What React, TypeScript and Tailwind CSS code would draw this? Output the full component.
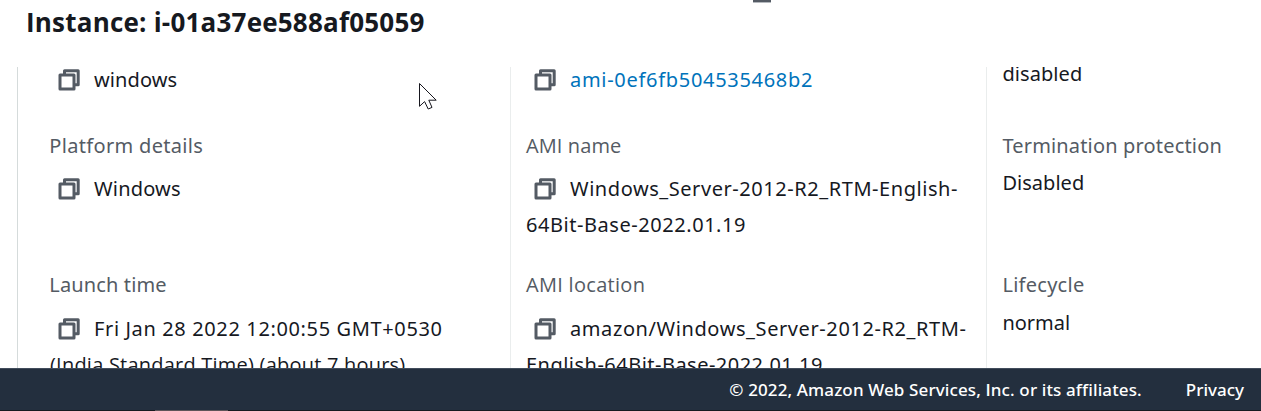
import React from "react";

function CopyIcon() {
  return (
    <svg
      className="ml-2 mr-[14px] inline-block align-[-4px]"
      width="22"
      height="22"
      viewBox="0 0 22 22"
      fill="none"
      stroke="#545b64"
      strokeWidth="3"
      strokeLinejoin="round"
    >
      <path d="M2 6h14v14H2z" />
      <path d="M6.5 6V1.8h13.7v14h-4.2" />
    </svg>
  );
}

function Label({ children, className = "" }: { children: React.ReactNode; className?: string }) {
  return <div className={`h-7 whitespace-nowrap leading-7 text-[#545b64] ${className}`}>{children}</div>;
}

const noto = "font-['Noto_Sans',sans-serif]";
const open = "font-['Open_Sans',sans-serif]";

export default function App() {
  return (
    <div className={`relative flex h-[411px] w-[1261px] flex-col overflow-hidden bg-white text-[20px] text-[#16191f] ${noto}`}>
      <header className="h-[67px] shrink-0 pl-[26px] pt-[4px]">
        <h1 className={`h-9 whitespace-nowrap text-[26px] font-bold leading-9 tracking-[0.21px] ${open}`}>
          Instance: i-01a37ee588af05059
        </h1>
      </header>
      <div className="absolute left-[753px] top-0 h-[3px] w-[18px] border-b border-[#b5b9be] bg-[#545b64]" />

      <main className="ml-[17px] grid h-[301px] shrink-0 grid-cols-[493px_476px_275px] overflow-hidden whitespace-nowrap">
        <section className="border-l border-[#d5dbdb] pl-8">
          <div className="-mt-[5px] h-[70px] leading-9">
            <CopyIcon />
            <span className="tracking-[0.09px]">windows</span>
          </div>
          <div className="h-[139px]">
            <Label className="-ml-[0.7px] tracking-[0.321px]">Platform details</Label>
            <div className="mt-[11px] leading-9">
              <CopyIcon />
              <span className="tracking-[0.193px]">Windows</span>
            </div>
          </div>
          <Label className="-ml-[0.7px] tracking-[0.134px]">Launch time</Label>
          <div className="mt-3 leading-9">
            <CopyIcon />
            <span className="tracking-[0.628px]">Fri Jan 28 2022 12:00:55 GMT+0530</span>
            <br />
            <span className={`tracking-[0.22px] ${open}`}>(India Standard Time) (about 7 hours)</span>
          </div>
        </section>

        <section className="border-l border-[#eaeded] pl-[15px]">
          <div className="-mt-[5px] h-[70px] leading-9">
            <CopyIcon />
            <a className="tracking-[0.7px] text-[#0073bb]">ami-0ef6fb504535468b2</a>
          </div>
          <div className="h-[139px]">
            <Label className={`tracking-[0.098px] ${open}`}>AMI name</Label>
            <div className="mt-[11px] leading-9">
              <CopyIcon />
              <span className="tracking-[0.556px]">Windows_Server-2012-R2_RTM-English-</span>
              <br />
              <span className="tracking-[0.55px]">64Bit-Base-2022.01.19</span>
            </div>
          </div>
          <Label className={`tracking-[0.3px] ${open}`}>AMI location</Label>
          <div className="mt-3 leading-9">
            <CopyIcon />
            <span className="tracking-[0.589px]">amazon/Windows_Server-2012-R2_RTM-</span>
            <br />
            <span className="tracking-[0.482px]">English-64Bit-Base-2022.01.19</span>
          </div>
        </section>

        <section className="border-l border-[#eaeded] pl-[15.4px]">
          <div className="-mt-[7px] h-[72px] leading-7 tracking-[0.08px]">disabled</div>
          <div className="h-[139px]">
            <Label className="tracking-[0.163px]">Termination protection</Label>
            <div className="mt-[9px] leading-7 tracking-[0.029px]">Disabled</div>
          </div>
          <Label className="tracking-[0.268px]">Lifecycle</Label>
          <div className="mt-[10px] leading-7 tracking-[-0.028px]">normal</div>
        </section>
      </main>

      <footer className="flex h-[42px] shrink-0 justify-end whitespace-nowrap border-t border-[#414d5c] bg-[#232f3e] pr-[17px] text-[17px] font-medium leading-[42px] text-white">
        <span className="mr-11 tracking-[0.12px]">
          © 2022, Amazon Web Services, <span className={`font-semibold ${open}`}>I</span>nc. or its affiliates.
        </span>
        <span>Privacy</span>
      </footer>
      <div className="h-px shrink-0 bg-[#16191f] pl-[155px]">
        <div className="h-px w-[73px] bg-[#5d5459]" />
      </div>

      <svg className="absolute left-[419px] top-[83px]" width="19" height="28" viewBox="0 0 19 28">
        <path
          d="M0.5 0.5V23.3L5.6 18.6L9.2 26L13 24.4L9.8 17.2H17.2Z"
          fill="#fff"
          stroke="#16161e"
          strokeWidth="1"
        />
      </svg>
    </div>
  );
}
